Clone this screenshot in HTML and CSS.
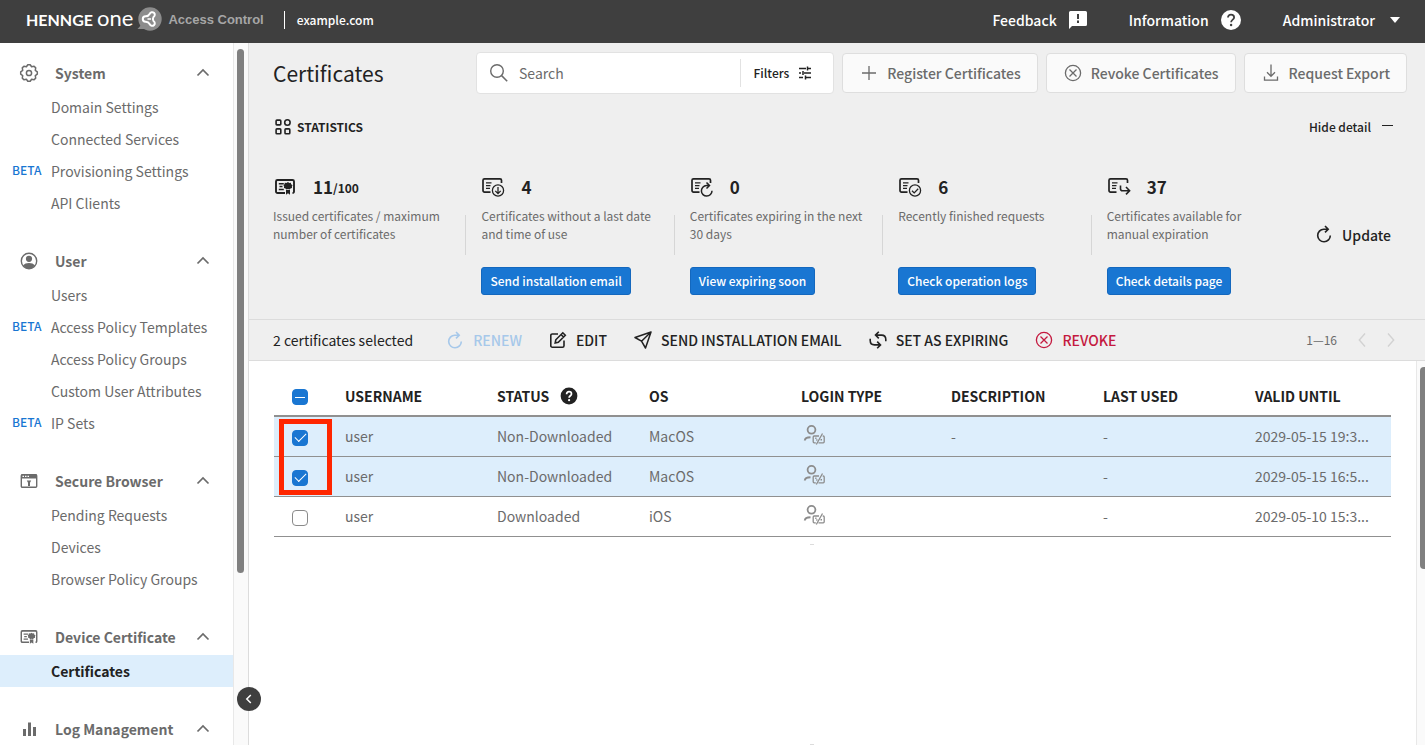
FILE: index.html
```html
<!DOCTYPE html>
<html lang="en">
<head>
<meta charset="utf-8">
<title>Certificates - Access Control</title>
<link rel="stylesheet" href="styles.css">
</head>
<body>
<svg class="sprite" aria-hidden="true">
  <symbol id="chevron-up" viewBox="0 0 14 14"><path d="M1.500 9.500 7 4l5.500 5.500" fill="none" stroke="currentColor" stroke-width="1.700"/></symbol>
  <symbol id="renew" viewBox="0 0 18 18"><path d="M12.500 4.200H8.800A6.300 6.300 0 1 0 15.300 10.500M10 1l3.200 3.200L10 7.400" fill="none" stroke="currentColor" stroke-width="1.600"/></symbol>
  <symbol id="revoke" viewBox="0 0 18 18"><g fill="none" stroke="currentColor" stroke-width="1.300"><circle cx="9" cy="9" r="7.600"/><path d="m5.500 5.500 7 7m0-7-7 7"/></g></symbol>
  <symbol id="cert" viewBox="0 0 20 16"><path d="M10 14H2.500A1.500 1.500 0 0 1 1 12.500v-10A1.500 1.500 0 0 1 2.500 1h15A1.500 1.500 0 0 1 19 2.500v10A1.500 1.500 0 0 1 17.500 14" fill="none" stroke="currentColor" stroke-width="1.900"/><path d="M3.800 4.800h5M4.500 7.600h3M3.800 10.500h5" stroke="currentColor" stroke-width="1.500"/><path d="m13 3 1.200.9 1.600-.1.400 1.500 1.300.9-.6 1.300.1 1.500-1.500.4-1 1.100-1.500-.600-1.500.600-1-1.100L9 9l.1-1.500-.6-1.300.9-.900.5-1.500 1.600.1zM11 11h4v4.800l-2-1.500-2 1.500z" fill="currentColor"/></symbol>
  <symbol id="cert-base" viewBox="0 0 24 20"><path d="M9.500 15.100H3.500A1.500 1.500 0 0 1 2 13.600V3.300A1.500 1.500 0 0 1 3.500 1.800h15.500A1.500 1.500 0 0 1 20.500 3.300V6" fill="none" stroke="currentColor" stroke-width="1.700"/><path d="M5 5.900h5.500M5 8.600h4.500M5 11.300h4" stroke="currentColor" stroke-width="1.300"/></symbol>
  <symbol id="login-type" viewBox="0 0 22 22"><g fill="none" stroke="currentColor"><circle cx="8.500" cy="5.800" r="3.900" stroke-width="1.800"/><path d="M1.800 16.500c.2-2 2-3.300 5.700-3.300" stroke-width="2"/><path d="M16 12H11.200a1 1 0 0 0-1 1v4.800a1 1 0 0 0 1 1h1.600M15.500 18.800h4.700a1 1 0 0 0 1-1V13a1 1 0 0 0-1-1h-.5M13.300 20.500l6.200-11" stroke-width="1.300"/><path d="M12.200 14.200h1.300M13.200 16h1.300M17.500 15.700h1.500" stroke-width="1.400"/></g></symbol>
</svg>

<header class="topbar">
  <a class="brand" href="#">
    <span class="brand-hennge">HENNGE</span>
    <span class="brand-one">one</span>
    <svg class="brand-mark" viewBox="0 0 25 25"><circle cx="13" cy="12" r="11.700" fill="#8c8c8c"/><path d="M.500 22 6 16l4 6z" fill="#8c8c8c"/><g fill="none" stroke="#fff" stroke-width="2"><path d="M8.500 9.300c2.500.2 3.500-1.200 4.300-2.600a2.600 2.600 0 1 1 3.700 3.300c-.9 1.300-.9 2.700 0 4a2.600 2.600 0 1 1-3.700 3.300c-.8-1.400-1.800-2.800-4.300-2.600a2.700 2.700 0 0 1 0-5.400z"/><path d="M10.500 12h3.500" stroke-width="1.500"/></g></svg>
    <span class="brand-product">Access Control</span>
  </a>
  <span class="tenant">example.com</span>
  <nav class="top-links">
    <a class="top-link" href="#">Feedback
      <svg class="ic-feedback" viewBox="0 0 18 18"><path d="M1.500 0h15A1.500 1.500 0 0 1 18 1.500v12a1.500 1.500 0 0 1-1.500 1.500H3L0 18V1.500A1.500 1.500 0 0 1 1.500 0z" fill="#fff"/><path d="M9 3v5M9 9.500V12" stroke="#3f3f3f" stroke-width="2"/></svg></a>
    <a class="top-link" href="#">Information
      <svg class="ic-20" viewBox="0 0 20 20"><circle cx="10" cy="10" r="10" fill="#fff"/><path d="M7 7.600C7 5.700 8.200 4.700 10 4.700s3.100 1 3.100 2.700c0 2.200-3 2.300-3 4.900" fill="none" stroke="#3f3f3f" stroke-width="1.800"/><circle cx="10.100" cy="15" r="1.200" fill="#3f3f3f"/></svg></a>
    <button class="top-link admin" type="button">Administrator
      <svg class="ic-caret" viewBox="0 0 10 6"><path d="M0 0h10L5 6z" fill="#fff"/></svg></button>
  </nav>
</header>

<div class="shell">
  <aside class="sidebar">
    <nav class="menu">
      <section class="group">
        <button class="group-head" type="button"><svg class="ic-20" viewBox="0 0 20 20"><g fill="none" stroke="currentColor" stroke-width="1.500" stroke-linejoin="round"><path d="M18.300 8.800v2.400l-2 1.400.4 2.500-1.600 1.600-2.500-.4-1.400 2H8.800l-1.400-2-2.500.4-1.600-1.600.4-2.500-2-1.400V8.800l2-1.400-.4-2.500 1.600-1.600 2.500.4 1.400-2h2.400l1.400 2 2.500-.4 1.600 1.600-.4 2.500z"/><circle cx="10" cy="10" r="2.600"/></g></svg><span>System</span><svg class="ic-14" viewBox="0 0 14 14"><use href="#chevron-up"/></svg></button>
        <a class="item" href="#"><span class="beta"></span>Domain Settings</a>
        <a class="item" href="#"><span class="beta"></span>Connected Services</a>
        <a class="item" href="#"><span class="beta">BETA</span>Provisioning Settings</a>
        <a class="item" href="#"><span class="beta"></span>API Clients</a>
      </section>
      <section class="group">
        <button class="group-head" type="button"><svg class="ic-20" viewBox="0 0 20 20"><circle cx="10" cy="10" r="7.700" fill="none" stroke="currentColor" stroke-width="1.400"/><circle cx="10" cy="7.800" r="3.100" fill="currentColor"/><path d="M4 14.500C5.300 12.800 7.500 12 10 12s4.700.800 6 2.500A7.700 7.700 0 0 1 10 17.700a7.700 7.700 0 0 1-6-3.200z" fill="currentColor"/></svg><span>User</span><svg class="ic-14" viewBox="0 0 14 14"><use href="#chevron-up"/></svg></button>
        <a class="item" href="#"><span class="beta"></span>Users</a>
        <a class="item" href="#"><span class="beta">BETA</span>Access Policy Templates</a>
        <a class="item" href="#"><span class="beta"></span>Access Policy Groups</a>
        <a class="item" href="#"><span class="beta"></span>Custom User Attributes</a>
        <a class="item" href="#"><span class="beta">BETA</span>IP Sets</a>
      </section>
      <section class="group">
        <button class="group-head" type="button"><svg class="ic-20" viewBox="0 0 20 20"><rect x="2.300" y="3.700" width="15.400" height="12.600" rx="1" fill="none" stroke="currentColor" stroke-width="1.400"/><path d="M2 3.500h16v4H2z" fill="currentColor"/><path d="M3.500 5.300h1.500M6 5.300h1.500M8.500 5.300H10" stroke="#fff" stroke-width="1.200"/><path d="M7.800 9.500h4.400L11 11.800v3.200H9v-3.200z" fill="currentColor"/></svg><span>Secure Browser</span><svg class="ic-14" viewBox="0 0 14 14"><use href="#chevron-up"/></svg></button>
        <a class="item" href="#"><span class="beta"></span>Pending Requests</a>
        <a class="item" href="#"><span class="beta"></span>Devices</a>
        <a class="item" href="#"><span class="beta"></span>Browser Policy Groups</a>
      </section>
      <section class="group">
        <button class="group-head" type="button"><svg class="ic-20" viewBox="-1.500 -2 23 20"><use href="#cert" width="20" height="16"/></svg><span>Device Certificate</span><svg class="ic-14" viewBox="0 0 14 14"><use href="#chevron-up"/></svg></button>
        <a class="item current" href="#" aria-current="page"><span class="beta"></span>Certificates</a>
      </section>
      <section class="group">
        <button class="group-head" type="button"><svg class="ic-20" viewBox="0 0 20 20"><path d="M4 10h3v7H4zM9 3.500h3V17H9zM14 8h3v9h-3z" fill="currentColor"/></svg><span>Log Management</span><svg class="ic-14" viewBox="0 0 14 14"><use href="#chevron-up"/></svg></button>
      </section>
    </nav>
    <div class="menu-track"><div class="menu-thumb"></div></div>
    <button class="collapse" type="button" aria-label="Collapse menu"><svg viewBox="0 0 10 10"><path d="M6.800 1 2.800 5l4 4" fill="none" stroke="#fff" stroke-width="1.500"/></svg></button>
  </aside>

  <main class="main">
    <div class="panel">
      <div class="tools">
        <h1>Certificates</h1>
        <div class="search">
          <svg class="ic-20" viewBox="0 0 20 20"><circle cx="8" cy="8" r="6.300" fill="none" stroke="#6b6b6b" stroke-width="1.400"/><path d="m12.600 12.600 5.600 5.600" stroke="#6b6b6b" stroke-width="1.500"/></svg>
          <input type="text" placeholder="Search" aria-label="Search">
          <button class="filters" type="button">Filters
            <svg class="ic-14" viewBox="0 0 14 14"><path d="M1 2.500h7M10 2.500h3M9.500.500v4M1 7h2M6 7h7M5 5v4M1 11.500h4M8 11.500h5M7.500 9.500v4" fill="none" stroke="currentColor" stroke-width="1.500"/></svg></button>
        </div>
        <button class="btn" type="button"><svg class="ic-18" viewBox="0 0 18 18"><path d="M9 2v14M2 9h14" stroke="currentColor" stroke-width="1.300"/></svg>Register Certificates</button>
        <button class="btn" type="button"><svg class="ic-18" viewBox="0 0 18 18"><use href="#revoke"/></svg>Revoke Certificates</button>
        <button class="btn" type="button"><svg class="ic-18" viewBox="0 0 18 18"><path d="M9 .5v11.500M5 8.300l4 4 4-4M2.500 12.500v3.700h13v-3.700" fill="none" stroke="currentColor" stroke-width="1.300"/></svg>Request Export</button>
      </div>

      <div class="stat-head">
        <h2><svg class="ic-18" viewBox="0 0 18 18"><g fill="none" stroke="currentColor" stroke-width="1.600"><rect x="2.100" y="2.100" width="4.700" height="4.800" rx=".800"/><circle cx="13.400" cy="4.500" r="2.700"/><rect x="2.100" y="10.900" width="4.700" height="4.800" rx=".800"/><rect x="11" y="10.900" width="4.800" height="4.800" rx=".800"/></g></svg>STATISTICS</h2>
        <button class="plain" type="button">Hide detail <span class="dash"></span></button>
      </div>

      <div class="stats">
        <div class="stat">
          <div class="figure"><svg class="ic-stat" viewBox="-2 -2 24 20"><use href="#cert" width="20" height="16"/></svg><b>11</b><small>/100</small></div>
          <div class="about"><p>Issued certificates / maximum number of certificates</p><span class="rule"></span></div>
        </div>
        <div class="stat">
          <div class="figure"><svg class="ic-stat" viewBox="0 0 24 20"><use href="#cert-base"/><g fill="none" stroke="currentColor" stroke-width="1.300"><circle cx="17" cy="13.500" r="5.600"/><path d="M17 10v6.500M14.300 13.900l2.700 2.700 2.700-2.700"/></g></svg><b>4</b></div>
          <div class="about"><p>Certificates without a last date and time of use</p><span class="rule"></span></div>
          <button class="action" type="button">Send installation email</button>
        </div>
        <div class="stat">
          <div class="figure"><svg class="ic-stat" viewBox="0 0 24 20"><use href="#cert-base"/><path d="M19 8.500h-2.500A5.300 5.300 0 1 0 22 13.800M16.500 5.500l3 3-3 3" fill="none" stroke="currentColor" stroke-width="1.500"/></svg><b>0</b></div>
          <div class="about"><p>Certificates expiring in the next 30 days</p><span class="rule"></span></div>
          <button class="action" type="button">View expiring soon</button>
        </div>
        <div class="stat">
          <div class="figure"><svg class="ic-stat" viewBox="0 0 24 20"><use href="#cert-base"/><g fill="none" stroke="currentColor" stroke-width="1.300"><circle cx="17" cy="13.500" r="5.600"/><path d="m14 13.700 2.200 2.200 4-4.200"/></g></svg><b>6</b></div>
          <div class="about"><p>Recently finished requests</p><span class="rule"></span></div>
          <button class="action" type="button">Check operation logs</button>
        </div>
        <div class="stat">
          <div class="figure"><svg class="ic-stat" viewBox="0 0 24 20"><use href="#cert-base"/><path d="M13.500 8.500v3.200a2 2 0 0 0 2 2H22M19 10l3.600 3.700-3.600 3.700" fill="none" stroke="currentColor" stroke-width="1.600"/></svg><b>37</b></div>
          <div class="about"><p class="narrow">Certificates available for manual expiration</p></div>
          <button class="action" type="button">Check details page</button>
        </div>
        <button class="update" type="button"><svg class="ic-18" viewBox="0 0 18 18"><use href="#renew"/></svg>Update</button>
      </div>
    </div>

    <div class="bulk">
      <span class="selected">2 certificates selected</span>
      <button class="bulk-btn" type="button" disabled><svg class="ic-18" viewBox="0 0 18 18"><use href="#renew"/></svg>RENEW</button>
      <button class="bulk-btn" type="button"><svg class="ic-18" viewBox="0 0 18 18"><path d="M9 3H3.300A1.500 1.500 0 0 0 1.800 4.500v10.200a1.500 1.500 0 0 0 1.500 1.500h10.200a1.500 1.500 0 0 0 1.500-1.500V9.500M6.200 12l.6-3.200 7-7 2.500 2.500-7 7zM12 3.500 14.500 6" fill="none" stroke="currentColor" stroke-width="1.600"/></svg>EDIT</button>
      <button class="bulk-btn" type="button"><svg class="ic-18" viewBox="0 0 18 18"><path d="M17 1 1 6.500l6.500 3.700L11.500 17zM17 1 7.500 10.200" fill="none" stroke="currentColor" stroke-width="1.500" stroke-linejoin="round"/></svg>SEND INSTALLATION EMAIL</button>
      <button class="bulk-btn" type="button"><svg class="ic-18" viewBox="0 0 18 18"><path d="M9.800.8 6.500 4.100l3.300 3.300M6.800 4.100h5.700c3 0 4.300 1.800 4.300 4.400v1.700M8.200 10.600l3.300 3.300-3.300 3.300M11.200 13.900H5.500c-3 0-4.300-1.800-4.300-4.400V7.800" fill="none" stroke="currentColor" stroke-width="1.600"/></svg>SET AS EXPIRING</button>
      <button class="bulk-btn danger" type="button"><svg class="ic-18" viewBox="0 0 18 18"><use href="#revoke"/></svg>REVOKE</button>
      <div class="pager"><span>1—16</span>
        <button type="button" disabled aria-label="Previous page"><svg viewBox="0 0 8 14"><path d="M7 .500 1.300 7 7 13.500" fill="none" stroke="currentColor" stroke-width="1.400"/></svg></button>
        <button type="button" disabled aria-label="Next page"><svg viewBox="0 0 8 14"><path d="M1 .500 6.700 7 1 13.500" fill="none" stroke="currentColor" stroke-width="1.400"/></svg></button>
      </div>
    </div>

    <div class="list">
      <div class="list-body">
        <table>
          <thead>
            <tr>
              <th class="c-check"><input class="box mixed" type="checkbox" checked aria-label="Select all"></th>
              <th class="c-std">USERNAME</th>
              <th class="c-std"><span class="with-help">STATUS <svg class="ic-18" viewBox="0 0 18 18"><circle cx="9" cy="9" r="8.400" fill="currentColor"/><path d="M6.600 7.200C6.600 5.600 7.500 4.700 9 4.700s2.500.900 2.500 2.200c0 1.800-2.400 1.900-2.400 3.900" fill="none" stroke="#fff" stroke-width="1.700"/><circle cx="9.100" cy="13.200" r="1.100" fill="#fff"/></svg></span></th>
              <th class="c-std">OS</th>
              <th class="c-login">LOGIN TYPE</th>
              <th class="c-std">DESCRIPTION</th>
              <th class="c-std">LAST USED</th>
              <th>VALID UNTIL</th>
            </tr>
          </thead>
          <tbody>
            <tr class="on">
              <td class="check"><input class="box" type="checkbox" checked aria-label="Select row 1"><span class="highlight"></span></td>
              <td>user</td><td>Non-Downloaded</td><td>MacOS</td>
              <td><svg class="ic-login" viewBox="0 0 22 22"><use href="#login-type"/></svg></td>
              <td>-</td><td>-</td><td class="clip">2029-05-15 19:3...</td>
            </tr>
            <tr class="on">
              <td class="check"><input class="box" type="checkbox" checked aria-label="Select row 2"></td>
              <td>user</td><td>Non-Downloaded</td><td>MacOS</td>
              <td><svg class="ic-login" viewBox="0 0 22 22"><use href="#login-type"/></svg></td>
              <td></td><td>-</td><td class="clip">2029-05-15 16:5...</td>
            </tr>
            <tr>
              <td class="check"><input class="box" type="checkbox" aria-label="Select row 3"></td>
              <td>user</td><td>Downloaded</td><td>iOS</td>
              <td><svg class="ic-login" viewBox="0 0 22 22"><use href="#login-type"/></svg></td>
              <td></td><td>-</td><td class="clip">2029-05-10 15:3...</td>
            </tr>
          </tbody>
        </table>
        <div class="ticks"><span></span><span></span></div>
      </div>
      <div class="list-track"><div class="list-thumb"></div></div>
    </div>
  </main>
</div>
</body>
</html>
```
FILE: styles.css
```css
* { box-sizing: border-box; }

body {
  margin: 0;
  height: 100vh;
  display: flex;
  flex-direction: column;
  overflow: hidden;
  font: 14px/20px "Noto Sans CJK JP", sans-serif;
  color: #222;
  background: #fff;
}

button {
  font: inherit;
  color: inherit;
  background: none;
  border: 0;
  padding: 0;
}

a { color: inherit; text-decoration: none; }
h1, h2, p { margin: 0; }
svg { display: block; flex: none; }
.sprite { position: absolute; width: 0; height: 0; }

.ic-14 { width: 14px; height: 14px; }
.ic-18 { width: 18px; height: 18px; }
.ic-20 { width: 20px; height: 20px; }

/* Top bar */
.topbar {
  flex: none;
  height: 43px;
  display: flex;
  align-items: center;
  padding: 0 25px 4px 26px;
  background: #3f3f3f;
  color: #fff;
}
.brand { display: flex; align-items: center; }
.brand-hennge { font: 16px/24px Lato, sans-serif; font-weight: 700; }
.brand-one { font: 22px/24px Lato, sans-serif; margin: 0 4px 4px 4px; }
.brand-mark { width: 25px; height: 25px; }
.brand-product {
  font: bold 13px/20px "Liberation Sans", sans-serif;
  color: #a6a6a6;
  margin-left: 6px;
}
.tenant {
  margin-left: 20px;
  padding-left: 12px;
  border-left: 1px solid #fff;
  font-size: 12px;
  line-height: 18px;
  font-weight: 500;
}
.top-links { margin-left: auto; display: flex; gap: 42px; }
.top-link {
  display: flex;
  align-items: center;
  gap: 12px;
  font-weight: 500;
}
.admin { gap: 15px; }
.ic-feedback { width: 18px; height: 18px; }
.ic-caret { width: 10px; height: 6px; }

/* Sidebar */
.shell { flex: 1; min-height: 0; display: flex; }
.sidebar {
  position: relative;
  flex: none;
  width: 249px;
  display: flex;
  border-right: 1px solid #dcdcdc;
}
.menu {
  flex: 1;
  padding-top: 12px;
  overflow: hidden;
  color: #6b6b6b;
}
.group { margin-bottom: 24px; }
.group-head {
  width: 100%;
  height: 36px;
  display: flex;
  align-items: center;
  padding: 0 23px 0 19px;
  text-align: left;
  font-weight: 700;
}
.group-head span { flex: 1; margin-left: 16px; }
.item {
  height: 32px;
  display: flex;
  align-items: center;
  padding-left: 12px;
}
.beta {
  width: 39px;
  padding-bottom: 2px;
  font-size: 12px;
  font-weight: 500;
  color: #1976d2;
}
.current { background: #ddeefc; color: #222; font-weight: 700; }
.menu-track {
  flex: none;
  width: 15px;
  padding: 6px 0 0 3px;
  border-left: 1px solid #e8e8e8;
  background: #fafafa;
}
.menu-thumb { width: 7px; height: 524px; border-radius: 4px; background: #808080; }
.collapse {
  position: absolute;
  right: -13px;
  bottom: 34px;
  z-index: 2;
  width: 24px;
  height: 24px;
  display: grid;
  place-items: center;
  border-radius: 50%;
  background: #3f3f3f;
}
.collapse svg { width: 10px; height: 10px; }

/* Summary panel */
.main { flex: 1; min-width: 0; display: flex; flex-direction: column; }
.panel { background: #efefef; padding: 9px 0 24px 24px; }
.tools {
  display: flex;
  align-items: center;
  gap: 8px;
  padding-right: 18px;
}
h1 { flex: 0 0 195px; font-size: 21px; line-height: 30px; font-weight: 400; }
.search {
  flex: 1;
  min-width: 0;
  height: 42px;
  display: flex;
  align-items: center;
  padding-left: 12px;
  background: #fff;
  border: 1px solid #e2e2e2;
  border-radius: 4px;
}
.search input {
  flex: 1;
  min-width: 0;
  margin-left: 10px;
  padding: 0;
  border: 0;
  outline: 0;
  font: inherit;
  color: #222;
}
.search input::placeholder { color: #6b6b6b; opacity: 1; }
.filters {
  height: 28px;
  display: flex;
  align-items: center;
  gap: 9px;
  padding: 0 21px 0 13px;
  border-left: 1px solid #e2e2e2;
  font-size: 12px;
  font-weight: 500;
}
.btn {
  height: 40px;
  display: flex;
  align-items: center;
  gap: 9px;
  padding: 0 16px 0 17px;
  background: #fafafa;
  border: 1px solid #dedede;
  border-radius: 4px;
  color: #6b6b6b;
  font-weight: 500;
  white-space: nowrap;
}
.stat-head {
  display: flex;
  justify-content: space-between;
  align-items: center;
  padding: 23px 32px 0 1px;
}
h2 {
  display: flex;
  align-items: center;
  gap: 5px;
  font-size: 12px;
  line-height: 20px;
  font-weight: 700;
}
.plain { display: flex; align-items: center; gap: 11px; font-size: 12px; font-weight: 500; }
.dash { width: 11px; height: 1px; background: #222; margin-bottom: 3px; }

.stats {
  display: grid;
  grid-template-columns: repeat(5, 1fr) auto;
  padding: 38px 34px 0 0;
}
.figure { height: 24px; display: flex; align-items: center; }
.figure b { margin-left: 16px; font-size: 17px; }
.figure small { font-size: 12px; font-weight: 700; padding-top: 2px; }
.ic-stat { width: 24px; height: 20px; }
.about { display: flex; height: 48px; margin-top: 8px; }
.about p {
  flex: 1;
  padding-right: 8px;
  font-size: 12px;
  line-height: 18px;
  color: #6b6b6b;
}
.about .narrow { padding-right: 48px; }
.rule { width: 1px; height: 40px; margin: 8px 15px 0 0; background: #d6d6d6; }
.action {
  height: 28px;
  margin-top: 12px;
  padding: 0 8px;
  border: 1px solid #1468be;
  border-radius: 3px;
  background: #1976d2;
  color: #fff;
  font-size: 12px;
  font-weight: 500;
  white-space: nowrap;
}
.update {
  align-self: center;
  display: flex;
  gap: 9px;
  font-weight: 500;
}

/* Bulk actions */
.bulk {
  height: 42px;
  flex: none;
  display: flex;
  align-items: center;
  padding: 0 30px 0 24px;
  background: #efefef;
  border: solid #dcdcdc;
  border-width: 1px 0;
  white-space: nowrap;
}
.selected { margin-right: 6px; }
.bulk-btn {
  display: flex;
  align-items: center;
  gap: 9px;
  margin-left: 27px;
  font-weight: 500;
}
.bulk-btn:disabled { color: #a6c8ea; }
.danger { color: #c4193f; }
.pager { margin-left: auto; display: flex; align-items: center; gap: 21px; font-size: 12px; color: #6b6b6b; }
.pager button { color: #d2d2d2; }
.pager svg { width: 8px; height: 14px; }

/* Certificate list */
.list { flex: 1; min-height: 0; display: flex; }
.list-body {
  flex: 1;
  min-width: 0;
  display: flex;
  flex-direction: column;
  padding: 16px 25px 0;
}
table { width: 100%; border-collapse: separate; border-spacing: 0; table-layout: fixed; }
.c-check { width: 71px; }
.c-std { width: 152px; }
.c-login { width: 150px; }
th {
  height: 40px;
  padding: 0;
  text-align: left;
  font-weight: 700;
  border-bottom: 2px solid #909090;
}
td {
  height: 40px;
  padding: 0 0 2px;
  color: #6b6b6b;
  border-bottom: 1px solid #909090;
}
.on td { background: #ddeefc; }
.c-check, .check { padding: 2px 0 0 18px; }
.check { position: relative; }
.clip { overflow: hidden; text-overflow: ellipsis; white-space: nowrap; }
.with-help { display: flex; align-items: center; gap: 11px; }
.ic-login { width: 22px; height: 22px; margin: -2px 0 0 2px; color: #8c8c8c; }
.box {
  appearance: none;
  display: grid;
  place-items: center;
  width: 16px;
  height: 16px;
  margin: 0;
  border: 1px solid #8a8a8a;
  border-radius: 4px;
  background: #fff;
}
.box:checked { border-color: #1976d2; background: #1976d2; }
.box:checked::before {
  content: "";
  width: 10px;
  height: 5px;
  margin-bottom: 3px;
  border: solid #fff;
  border-width: 0 0 1px 1px;
  transform: rotate(-45deg);
}
.box.mixed::before { height: 1px; margin: 0; border-width: 0; background: #fff; transform: none; }
.highlight {
  position: absolute;
  z-index: 1;
  left: 5px;
  top: 2px;
  width: 53px;
  height: 76px;
  border: 5px solid #ff2600;
}
.ticks {
  flex: 1;
  display: flex;
  flex-direction: column;
  justify-content: space-between;
  padding: 7px 0 0 48%;
}
.ticks span { width: 4px; height: 1px; background: #dcdcdc; }
.list-track {
  flex: none;
  width: 9px;
  padding: 6px 0 0 3px;
  border-left: 1px solid #e8e8e8;
  background: #fafafa;
}
.list-thumb { height: 202px; border-radius: 4px 0 0 4px; background: #808080; }
```
